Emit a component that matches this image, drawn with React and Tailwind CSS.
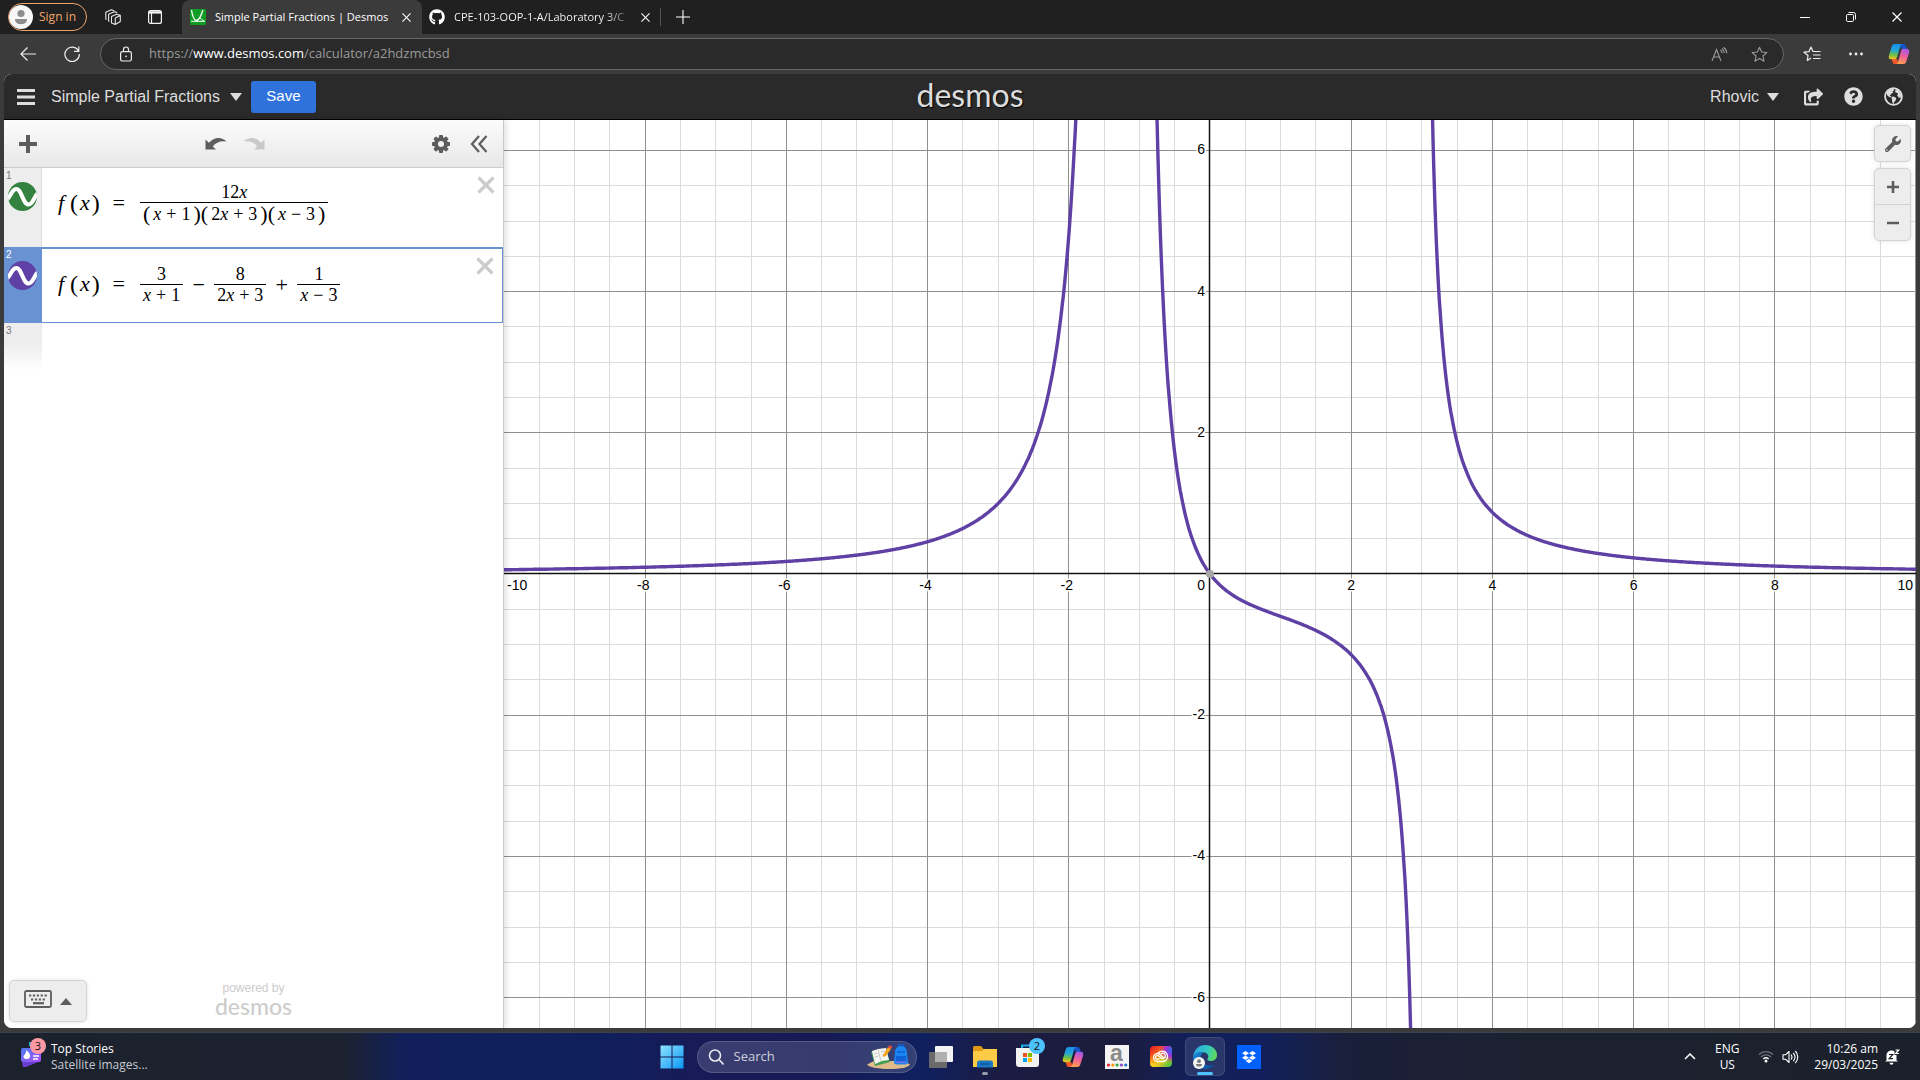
import React from "react";
import { FaGithub, FaWrench, FaQuestionCircle, FaShareSquare } from "react-icons/fa";

const UI = "font-['Open_Sans','Noto_Sans',sans-serif]";
const SANS = "font-['Liberation_Sans',Arial,sans-serif]";

/* ---------- shared drawings ---------- */

function CopilotIcon({ id, className }) {
  return (
    <svg viewBox="0 0 24 24" className={className} aria-hidden="true">
      <defs>
        <linearGradient id={id + "a"} x1="0.4" y1="0" x2="0.3" y2="1">
          <stop offset="0" stopColor="#1a8fe8" />
          <stop offset="0.4" stopColor="#22a7d8" />
          <stop offset="0.7" stopColor="#6cc04a" />
          <stop offset="1" stopColor="#f5c518" />
        </linearGradient>
        <linearGradient id={id + "b"} x1="0.7" y1="0" x2="0.4" y2="1">
          <stop offset="0" stopColor="#a259e6" />
          <stop offset="0.5" stopColor="#f0609a" />
          <stop offset="1" stopColor="#ffa14d" />
        </linearGradient>
      </defs>
      <path d="M12 1h5c1.500 0 2.200 1 2.700 2.500L20.500 6.500H15Z" fill="#1454c8" />
      <path d="M12 23H7.500C6 23 5.300 22 4.800 20.500L4 17.500h6Z" fill="#f0562c" />
      <path d="M7 1h9c-1.500 0-2.300 1.200-2.800 3L10 15c-.6 2-1.500 2.800-3.500 2.800H3.500C1 17.800.3 15.800 1 13.500L4 4c.6-2 1.500-3 3-3Z" fill={`url(#${id}a)`} />
      <path d="M17 23H8.500c1.300 0 2.200-1.200 2.700-3L14.200 9c.6-2 1.500-2.600 3.300-2.600h3C23 6.400 23.700 8.400 23 10.600L20 20c-.6 2-1.500 3-3 3Z" fill={`url(#${id}b)`} />
    </svg>
  );
}

function CloseGlyph({ className }) {
  return (
    <svg viewBox="0 0 10 10" className={className} aria-hidden="true">
      <path d="M0.500 0.500 9.500 9.500M9.500 0.500 0.500 9.500" stroke="currentColor" strokeWidth="1.200" fill="none" />
    </svg>
  );
}

/* ---------- browser chrome ---------- */

function TabStrip() {
  return (
    <header className={`${UI} flex h-[34px] shrink-0 items-stretch bg-[#202020] text-xs text-white`}>
      <button className="my-[3px] ml-2 flex w-[79px] shrink-0 items-center gap-[6px] rounded-full border border-[#f0a46c] text-[#f0a46c]">
        <svg viewBox="0 0 24 24" className="h-6 w-6 shrink-0" aria-hidden="true">
          <circle cx="12" cy="12" r="12" fill="#f7f7f7" />
          <circle cx="12" cy="8.500" r="3.600" fill="#8d8d8d" />
          <path d="M6 14h12c0 3.500-2.500 5.200-6 5.200S6 17.500 6 14Z" fill="#8d8d8d" />
        </svg>
        <span className="whitespace-nowrap">Sign in</span>
      </button>
      <button aria-label="Workspaces" className="ml-[5px] flex w-[42px] shrink-0 items-center justify-center">
        <svg viewBox="0 0 16 16" className="h-4 w-4" fill="none" stroke="#e6e6e6" strokeWidth="1.100" strokeLinejoin="round" aria-hidden="true">
          <path d="M6.500 7.500 11.500 5.300 15.300 6.400v6.200l-5 2.800-3.800-1.500ZM10.300 9v6.400M10.300 9l5-2.600" />
          <path d="M4.300 12.500 3.600 12V5.200l5.600-2.500 3 .9" />
          <path d="M1.600 10.500.8 10V3.300L6.300.8l3 .9" />
        </svg>
      </button>
      <button aria-label="Tab actions" className="flex w-[42px] shrink-0 items-center justify-center">
        <svg viewBox="0 0 14 14" className="h-[14px] w-[14px]" fill="none" stroke="#f2f2f2" strokeWidth="1.200" aria-hidden="true">
          <rect x="0.600" y="0.600" width="12.800" height="12.800" rx="2" />
          <path d="M0.600 2.400h12.800" strokeWidth="2.400" />
          <path d="M3.500 3v10.400" />
        </svg>
      </button>
      <div className="ml-[6px] flex w-[240px] shrink-0 items-center rounded-t-lg bg-[#3b3b3b] pl-2">
        <svg viewBox="0 0 16 16" className="h-4 w-4 shrink-0" aria-hidden="true">
          <rect width="16" height="16" rx="1" fill="#0d9a22" />
          <path d="M0 6h16M0 11h16M5 0v16M11 0v16" stroke="#2fae40" strokeWidth="0.500" />
          <path d="M1.500 1c1 6.500 2.500 10.500 5 10.500S11 7 13 1" stroke="#fff" strokeWidth="1.300" fill="none" />
          <path d="M1 12.300h14M6.500 11.500C8 11.500 8 9 10 9c1.500 0 2 3 4 3" stroke="#fff" strokeWidth="1" fill="none" />
        </svg>
        <span className="ml-[9px] flex-1 text-[11px] whitespace-nowrap">Simple Partial Fractions | Desmos</span>
        <button aria-label="Close tab" className="flex h-6 w-8 items-center justify-center">
          <CloseGlyph className="h-[9px] w-[9px]" />
        </button>
      </div>
      <div className="flex w-[238px] shrink-0 items-center pl-[7px]">
        <FaGithub className="h-4 w-4 shrink-0 text-white" />
        <span className="ml-[9px] w-[178px] bg-linear-to-r from-white from-85% to-white/10 bg-clip-text text-[11px] whitespace-nowrap text-transparent">CPE-103-OOP-1-A/Laboratory 3/C</span>
        <button aria-label="Close tab" className="flex h-6 w-[26px] items-center justify-center">
          <CloseGlyph className="h-[9px] w-[9px]" />
        </button>
      </div>
      <div className="my-2 w-px bg-[#555]" />
      <button aria-label="New tab" className="flex w-11 shrink-0 items-center justify-center">
        <svg viewBox="0 0 14 14" className="h-[14px] w-[14px]" aria-hidden="true">
          <path d="M7 0v14M0 7h14" stroke="#fff" strokeWidth="1.100" />
        </svg>
      </button>
      <div className="flex-1" />
      <button aria-label="Minimize" className="flex w-[46px] items-center justify-center">
        <svg viewBox="0 0 10 10" className="h-[10px] w-[10px]" aria-hidden="true"><path d="M0 5.500h10" stroke="#fff" /></svg>
      </button>
      <button aria-label="Restore" className="flex w-[46px] items-center justify-center">
        <svg viewBox="0 0 10 10" className="h-[10px] w-[10px]" fill="none" stroke="#fff" aria-hidden="true">
          <rect x="0.500" y="2.500" width="7" height="7" rx="1.200" />
          <path d="M2.500.5h5a2 2 0 0 1 2 2v5" />
        </svg>
      </button>
      <button aria-label="Close" className="flex w-[46px] items-center justify-center">
        <CloseGlyph className="h-[10px] w-[10px]" />
      </button>
    </header>
  );
}

const STAR = "M8 1.200l2 4.500 4.900.5-3.700 3.200 1.100 4.900L8 11.800l-4.300 2.500 1.100-4.900L1.100 6.200 6 5.700Z";

function AddressBar() {
  return (
    <nav className={`${UI} flex h-10 shrink-0 items-center bg-[#3b3b3b] text-[#eee]`}>
      <button aria-label="Back" className="ml-[6px] flex h-8 w-11 items-center justify-center">
        <svg viewBox="0 0 16 16" className="h-4 w-4" fill="none" stroke="currentColor" strokeWidth="1.200" aria-hidden="true">
          <path d="M16 8H1M7.500 1.500 1 8l6.500 6.500" />
        </svg>
      </button>
      <button aria-label="Refresh" className="flex h-8 w-11 items-center justify-center">
        <svg viewBox="0 0 16 16" className="h-4 w-4" fill="none" stroke="currentColor" strokeWidth="1.200" aria-hidden="true">
          <path d="M14.500 5A7.200 7.200 0 1 0 15.300 8M14.800 0.500v4.800h-4.800" />
        </svg>
      </button>
      <div className="ml-[6px] flex h-8 flex-1 items-center rounded-full border border-[#666] bg-[#2a2a2a] text-[13px]">
        <button aria-label="Site information" className="ml-[19px] flex w-3 items-center justify-center">
          <svg viewBox="0 0 12 16" className="h-4 w-3 shrink-0" fill="none" stroke="currentColor" strokeWidth="1.200" aria-hidden="true">
            <rect x="0.600" y="5.600" width="10.800" height="9.400" rx="1.800" />
            <path d="M3.500 5.500V3.500a2.500 2.500 0 0 1 5 0v2" />
            <circle cx="6" cy="10.300" r="0.900" fill="currentColor" stroke="none" />
          </svg>
        </button>
        <div role="textbox" aria-label="Address" className="ml-[17px] flex-1 whitespace-nowrap text-[#9a9a9a]">
          https://<span className="text-white">www.desmos.com</span>/calculator/a2hdzmcbsd
        </div>
        <button aria-label="Read aloud" className="flex w-10 items-center justify-center text-[#9c9c9c]">
          <svg viewBox="0 0 17 15" className="h-[15px] w-[17px]" fill="none" stroke="currentColor" strokeWidth="1.100" aria-hidden="true">
            <path d="M1 14 5.500 2.500 10 14M2.600 10h5.800M9.500 3c1 .8 1.500 1.800 1.500 3M11 1.500c1.500 1.200 2.300 2.600 2.300 4.500M12.500.3C14.700 1.900 15.800 3.900 15.800 6.300" />
          </svg>
        </button>
        <button aria-label="Add to favourites" className="mr-1 flex w-10 items-center justify-center text-[#9c9c9c]">
          <svg viewBox="0 0 16 16" className="h-[17px] w-[17px]" fill="none" stroke="currentColor" strokeLinejoin="round" aria-hidden="true"><path d={STAR} /></svg>
        </button>
      </div>
      <button aria-label="Favourites" className="ml-[6px] flex h-8 w-11 items-center justify-center">
        <svg viewBox="0 0 18 16" className="h-4 w-[18px]" fill="none" stroke="currentColor" strokeWidth="1.200" strokeLinejoin="round" aria-hidden="true">
          <path d="M8 12 4.300 14.500 5 9.500 1 6.200 6 5.600 8 1l2 4.500h7.500M10 9h7.500M10 12.500h7.500" />
        </svg>
      </button>
      <button aria-label="Settings and more" className="flex h-8 w-11 items-center justify-center">
        <svg viewBox="0 0 14 4" className="h-1 w-[14px]" fill="currentColor" aria-hidden="true">
          <circle cx="1.500" cy="2" r="1.400" /><circle cx="7" cy="2" r="1.400" /><circle cx="12.500" cy="2" r="1.400" />
        </svg>
      </button>
      <button aria-label="Copilot" className="flex h-8 w-[42px] items-center justify-center">
        <CopilotIcon id="cpTop" className="h-[22px] w-[22px]" />
      </button>
    </nav>
  );
}

/* ---------- calculator ---------- */

function AppHeader() {
  return (
    <header className={`${SANS} grid h-[46px] shrink-0 grid-cols-[1fr_auto_1fr] items-center border-b border-black bg-[#2a2a2a] text-[#ddd]`}>
      <div className="flex items-center">
        <button aria-label="Open graph list" className="ml-[13px] flex w-[18px] justify-center">
          <svg viewBox="0 0 18 16" className="h-4 w-[18px]" aria-hidden="true">
            <path d="M0 1.500h18M0 8h18M0 14.500h18" stroke="#ddd" strokeWidth="3" />
          </svg>
        </button>
        <button className="ml-4 flex items-center gap-[10px] whitespace-nowrap text-base">
          Simple Partial Fractions
          <svg viewBox="0 0 12 8" className="h-2 w-3" aria-hidden="true"><path d="M0 0h12L6 8Z" fill="#ddd" /></svg>
        </button>
        <button className="ml-[9px] h-8 w-[65px] rounded-[3px] bg-[#2f72dc] text-[15px] text-white">Save</button>
      </div>
      <div className="pb-[3px] pl-5 font-[Lato,sans-serif] text-[32px] leading-none text-[#ddd] text-shadow-[1px_1px_1px_#000]">desmos</div>
      <div className="flex items-center justify-end pr-[13px]">
        <button className="flex items-center gap-2 text-base">
          Rhovic
          <svg viewBox="0 0 12 8" className="h-2 w-3" aria-hidden="true"><path d="M0 0h12L6 8Z" fill="#ddd" /></svg>
        </button>
        <button aria-label="Share graph" className="ml-[25px] w-[19px]"><FaShareSquare className="h-[18px] w-[19px]" /></button>
        <button aria-label="Help" className="ml-[21px] w-[19px]"><FaQuestionCircle className="h-[19px] w-[19px]" /></button>
        <button aria-label="Language" className="ml-[21px] w-[19px]">
          <svg viewBox="0 0 18 18" className="h-[19px] w-[19px]" aria-hidden="true">
            <circle cx="9" cy="9" r="8" fill="none" stroke="#ddd" strokeWidth="1.700" />
            <path d="M3 4.500C4.500 2.800 6.500 1.500 9 1.500l.5 1.700-1.500.8 1 1L7 6.500 5.500 8 7 9.200l-1 .8L3.500 8.500 2.200 6Z" fill="#ddd" />
            <path d="M7 9.500 9 9l2.700 1.500-.7 2.300-1.500 1.700L9 16.500 7.800 14.500 7.600 12Z" fill="#ddd" />
            <path d="M11 2 14.200 3.500l2 3.500-.5 3.500-1.500-.2L12.500 8l.8-1.800-1.300-.8-1.500-.4Z" fill="#ddd" />
          </svg>
        </button>
      </div>
    </header>
  );
}

const V = ({ children }) => <i className="italic">{children}</i>;
const Op = ({ children }) => <span className="mx-[5px]">{children}</span>;

function Frac({ num, den }) {
  return (
    <span className="inline-flex flex-col items-center text-lg leading-5">
      <span>{num}</span>
      <span className="flex items-center justify-center whitespace-nowrap border-t border-black px-[3px]">{den}</span>
    </span>
  );
}

function Group({ children }) {
  return (
    <span className="flex items-center">
      <Paren small>(</Paren>
      <span className="px-[3px]">{children}</span>
      <Paren small>)</Paren>
    </span>
  );
}

function Paren({ small, children }) {
  return <span className={small ? "text-[22px] leading-[22px]" : "text-2xl leading-[26px]"}>{children}</span>;
}

function FOfX() {
  return (
    <span className="flex w-[84px] items-center text-[22px] leading-[26px]">
      <span className="w-[14px] pl-[2px]"><V>f</V></span>
      <Paren>(</Paren>
      <span className="px-[2px]"><V>x</V></span>
      <Paren>)</Paren>
      <span className="ml-auto">=</span>
      <span className="w-[15px]" />
    </span>
  );
}

function ExpressionRow({ index, color, selected, children }) {
  return (
    <li className={selected ? "flex h-[76px] border-2 border-x-0 border-b-0 border-[#6992d2]" : "flex h-[79px]"}>
      <div className={selected ? "flex w-[37px] shrink-0 flex-col items-center bg-[#6992d2] text-white" : "flex w-[38px] shrink-0 flex-col items-center border-r border-[#ddd] bg-[#ededed] text-[#777]"}>
        <span className={selected ? `${SANS} self-start pl-[2px] text-[10px] leading-3` : `${SANS} self-start pt-px pl-[2px] text-[10px] leading-[13px]`}>{index}</span>
        <button aria-label={`Toggle expression ${index}`} className="h-[29px] w-[29px]">
          <svg viewBox="0 0 29 29" className="h-[29px] w-[29px]" aria-hidden="true">
            <defs><clipPath id={`disc${index}`}><circle cx="14.500" cy="14.500" r="14.500" /></clipPath></defs>
            <circle cx="14.500" cy="14.500" r="14.500" fill={color} />
            <path d="M-1 17.500C3.500 13 4 7 8.500 7c5 0 6.500 15.500 12 15.500C25 22.500 25.500 15.500 30 11" stroke="#fff" strokeWidth="4.200" fill="none" clipPath={`url(#disc${index})`} />
          </svg>
        </button>
      </div>
      <div className={selected ? "flex flex-1 items-start border border-t-0 border-[#6992d2]" : "flex flex-1 items-start"}>
        <div role="math" className="flex h-[70px] flex-1 items-center pl-[14px] font-['Liberation_Serif',serif] text-[22px] text-black">
          {children}
        </div>
        <button aria-label="Delete expression" className="mt-2 mr-2">
          <svg viewBox="0 0 18 18" className="h-[18px] w-[18px]" aria-hidden="true">
            <path d="M1.500 1.500l15 15M16.500 1.500l-15 15" stroke="#ccc" strokeWidth="3.200" />
          </svg>
        </button>
      </div>
    </li>
  );
}

function ExpressionPanel() {
  const teeth = [0, 45, 90, 135, 180, 225, 270, 315];
  return (
    <aside className="z-10 flex w-[500px] shrink-0 flex-col border-r border-[#c9c9c9] bg-white shadow-[0_0_8px_rgba(0,0,0,0.2)]">
      <div className="flex h-12 shrink-0 items-center border-b border-[#ccc] bg-linear-to-b from-[#fcfcfc] to-[#e8e8e8] px-[15px]">
        <button aria-label="Add item">
          <svg viewBox="0 0 18 18" className="h-[18px] w-[18px]" aria-hidden="true"><path d="M9 0v18M0 9h18" stroke="#5d5d5d" strokeWidth="4" /></svg>
        </button>
        <div className="flex flex-1 items-center justify-center gap-4">
          <button aria-label="Undo">
            <svg viewBox="0 0 22 13" className="h-[13px] w-[22px]" aria-hidden="true">
              <path d="M0.500 2.500V12.500H11L7.800 9.500C10.500 5.500 15.500 3.500 21.500 4.500 17-.3 9-.6 4 5.800Z" fill="#5d5d5d" />
            </svg>
          </button>
          <button aria-label="Redo">
            <svg viewBox="0 0 22 13" className="h-[13px] w-[22px]" aria-hidden="true">
              <path d="M21.500 2.500V12.500H11L14.200 9.500C11.500 5.500 6.500 3.500.5 4.500 5-.3 13-.6 18 5.800Z" fill="#c9c9c9" />
            </svg>
          </button>
        </div>
        <button aria-label="Edit list">
          <svg viewBox="0 0 18 18" className="h-[18px] w-[18px]" aria-hidden="true">
            <circle cx="9" cy="9" r="5" fill="none" stroke="#5d5d5d" strokeWidth="4" />
            {teeth.map((a) => <rect key={a} x="7" y="0" width="4" height="4" rx="0.800" fill="#5d5d5d" transform={`rotate(${a} 9 9)`} />)}
          </svg>
        </button>
        <button aria-label="Hide expression list" className="ml-5">
          <svg viewBox="0 0 18 18" className="h-[18px] w-[18px]" fill="none" stroke="#5d5d5d" strokeWidth="2.200" aria-hidden="true">
            <path d="M9 1 2 9l7 8M16.500 1l-7 8 7 8" />
          </svg>
        </button>
      </div>
      <ol>
        <ExpressionRow index={1} color="#34823f">
          <FOfX />
          <Frac
            num={<>12<V>x</V></>}
            den={<>
              <Group><V>x</V><Op>+</Op>1</Group>
              <Group>2<V>x</V><Op>+</Op>3</Group>
              <Group><V>x</V><Op>−</Op>3</Group>
            </>}
          />
        </ExpressionRow>
        <ExpressionRow index={2} color="#5f41a5" selected>
          <FOfX />
          <Frac num="3" den={<span><V>x</V><Op>+</Op>1</span>} />
          <span className="w-[31px] text-center">−</span>
          <Frac num="8" den={<span>2<V>x</V><Op>+</Op>3</span>} />
          <span className="w-[31px] text-center">+</span>
          <Frac num="1" den={<span><V>x</V><Op>−</Op>3</span>} />
        </ExpressionRow>
        <li className="flex h-12">
          <div className="w-[38px] bg-linear-to-b from-[#ededed] from-40% to-white">
            <span className={`${SANS} block pl-[2px] pt-px text-[10px] leading-[13px] text-[#777]`}>3</span>
          </div>
        </li>
      </ol>
      <div className="mt-auto grid grid-cols-[1fr_auto_1fr] items-end px-[5px] pb-[6px]">
        <button aria-label="Show keypad" className="flex h-[42px] w-[78px] items-center justify-center gap-2 rounded-[5px] border border-[#d3d3d3] bg-[#ededed] pb-1 shadow-[0_0_5px_rgba(0,0,0,0.1)]">
          <svg viewBox="0 0 28 18" className="h-[18px] w-[28px]" aria-hidden="true">
            <rect x="1" y="1" width="26" height="16" rx="1.500" fill="none" stroke="#5d5d5d" strokeWidth="1.800" />
            <path d="M5 5.500h18" stroke="#5d5d5d" strokeWidth="2.200" strokeDasharray="2.200 1.700" />
            <path d="M7 9.500h15" stroke="#5d5d5d" strokeWidth="2.200" strokeDasharray="2.200 1.700" />
            <path d="M9 13.200h11" stroke="#5d5d5d" strokeWidth="2.200" />
          </svg>
          <svg viewBox="0 0 12 7" className="mt-1 h-[7px] w-3" aria-hidden="true"><path d="M0 7h12L6 0Z" fill="#5d5d5d" /></svg>
        </button>
        <div className="flex flex-col items-center pb-[5px] text-[#ccc]">
          <span className={`${SANS} text-xs leading-[14px]`}>powered by</span>
          <span className="font-[Lato,sans-serif] text-[23px] leading-[22px] font-medium">desmos</span>
        </div>
        <span />
      </div>
    </aside>
  );
}

const W = 1412, H = 908, OX = 706, OY = 454, UNIT = 70.6;
const f = (x) => 3 / (x + 1) - 8 / (2 * x + 3) + 1 / (x - 3);

function branch(from, to) {
  const pts = [];
  for (let x = from; x <= to; x += 0.01) {
    const y = f(x);
    if (Math.abs(y) < 9) pts.push(`${(OX + x * UNIT).toFixed(1)} ${(OY - y * UNIT).toFixed(1)}`);
  }
  return "M" + pts.join("L");
}

function Graph() {
  const xs = [], ys = [];
  for (let k = -20; k <= 20; k++) xs.push(k);
  for (let k = -12; k <= 12; k++) ys.push(k);
  const px = (k) => Math.floor(OX - 0.1 + (k / 2) * UNIT) + 0.5;
  const py = (k) => Math.floor(OY - (k / 2) * UNIT) + 0.5;
  const tone = (k) => (k % 4 === 0 ? "#909090" : "#dcdcdc");
  const halo = { paintOrder: "stroke", stroke: "#fff", strokeWidth: 3 };
  return (
    <main className="relative min-w-0 flex-1 bg-white">
      <svg viewBox={`0 0 ${W} ${H}`} preserveAspectRatio="xMidYMid slice" className="absolute inset-0 h-full w-full" role="img" aria-label="Graph of the function">
        {[1, 0].map((minor) => (
          <g key={minor}>
            {xs.filter((k) => k && (k % 4 !== 0) === !!minor).map((k) => <path key={"x" + k} d={`M${px(k)} 0V${H}`} stroke={tone(k)} />)}
            {ys.filter((k) => k && (k % 4 !== 0) === !!minor).map((k) => <path key={"y" + k} d={`M0 ${py(k)}H${W}`} stroke={tone(k)} />)}
          </g>
        ))}
        <path d={`M0 453.500H${W}M705.500 0V${H}`} stroke="#111" strokeWidth="1.500" />
        <g fontFamily="Liberation Sans, Arial, sans-serif" fontSize="14" fill="#000">
          {[-8, -6, -4, -2, 2, 4, 6, 8].map((n) => (
            <text key={n} x={OX + n * UNIT - (n < 0 ? 2 : 0)} y="470" textAnchor="middle" style={halo}>{n}</text>
          ))}
          <text x="3" y="470" style={halo}>-10</text>
          <text x={W - 3} y="470" textAnchor="end" style={halo}>10</text>
          <text x="701" y="470" textAnchor="end" style={halo}>0</text>
          {[-6, -4, -2, 2, 4, 6].map((n) => (
            <text key={n} x="701" y={OY - n * UNIT + 4} textAnchor="end" style={halo}>{n}</text>
          ))}
        </g>
        <g fill="none" stroke="#5f41a5" strokeWidth="3.400" strokeLinejoin="round">
          <path d={branch(-10.2, -1.55)} />
          <path d={branch(-0.97, 2.99)} />
          <path d={branch(3.01, 10.2)} />
        </g>
        <circle cx="706" cy="454" r="4" fill="#a6a6a6" />
      </svg>
      <div className="absolute top-[5px] right-[5px] flex w-[37px] flex-col gap-[6px] text-[#5d5d5d]">
        <button aria-label="Graph settings" className="flex h-[37px] items-center justify-center rounded-[5px] border border-[#d3d3d3] bg-[#ededed] shadow-[0_0_5px_rgba(0,0,0,0.12)]">
          <FaWrench className="h-4 w-4" />
        </button>
        <div className="flex flex-col rounded-[5px] border border-[#d3d3d3] bg-[#ededed] shadow-[0_0_5px_rgba(0,0,0,0.12)]">
          <button aria-label="Zoom in" className="flex h-9 items-center justify-center border-b border-[#d3d3d3]">
            <svg viewBox="0 0 12 12" className="h-3 w-3" aria-hidden="true"><path d="M6 0v12M0 6h12" stroke="currentColor" strokeWidth="2.600" /></svg>
          </button>
          <button aria-label="Zoom out" className="flex h-[35px] items-center justify-center">
            <svg viewBox="0 0 12 12" className="h-3 w-3" aria-hidden="true"><path d="M0 6h12" stroke="currentColor" strokeWidth="2.600" /></svg>
          </button>
        </div>
      </div>
    </main>
  );
}

/* ---------- taskbar ---------- */

function TaskButton({ label, active, running, children }) {
  return (
    <button aria-label={label} className="relative flex h-[47px] w-11 items-center justify-center">
      {active && <span className="absolute inset-x-[2px] inset-y-1 rounded-md border border-white/10 bg-white/10" />}
      <span className="relative">{children}</span>
      {running && <span className="absolute bottom-[5px] h-[3px] w-[6px] rounded-full bg-[#9a9aa8]" />}
      {active && <span className="absolute bottom-[5px] h-[3px] w-4 rounded-full bg-[#4cc2ff]" />}
    </button>
  );
}

function Taskbar() {
  return (
    <footer className={`${UI} grid h-12 shrink-0 grid-cols-[1fr_auto_1fr] items-center border-t border-[#3c4350] bg-[linear-gradient(90deg,#1c222c_0%,#1c2230_18%,#11205a_21%,#0f1f5c_31%,#171b57_36%,#151a55_43%,#0f2060_48%,#1b1c42_52%,#1c1c3c_58%,#12205a_62%,#11205a_66%,#1a1f3a_70%,#1c2130_80%,#1b212b_100%)] text-xs text-white`}>
      <button className="flex w-[160px] items-center gap-[9px] pl-5 text-left">
        <svg viewBox="0 0 26 30" className="-mt-2 -mr-1 h-[30px] w-[26px] shrink-0" aria-hidden="true">
          <defs><linearGradient id="news" x1="0" y1="0" x2="1" y2="1"><stop offset="0" stopColor="#4a7bf0" /><stop offset="1" stopColor="#b04cf8" /></linearGradient></defs>
          <path d="M2 24h16l-12 5H3Z" fill="#6a3fd0" />
          <path d="M9 8V4h8v6Z" fill="#2aa8c8" />
          <rect x="1" y="10" width="20" height="14" rx="2" fill="url(#news)" />
          <path d="M6.500 12c3 3 4 4.500 3.500 7s-6 3-6.500 0c0-2 2-2 3-7Z" fill="#fff" />
          <path d="M13 18h6M13 21h5" stroke="#fff" strokeWidth="1.400" />
          <circle cx="18" cy="8" r="8" fill="#ff99a4" />
          <text x="18" y="12" textAnchor="middle" fontSize="11" fill="#111" fontFamily="Open Sans, sans-serif">3</text>
        </svg>
        <span className="leading-4 whitespace-nowrap">
          <span className="block">Top Stories</span>
          <span className="block text-[#c4c8d0]">Satellite images...</span>
        </span>
      </button>

      <div className="flex items-center">
        <TaskButton label="Start">
          <svg viewBox="0 0 24 24" className="h-6 w-6" aria-hidden="true">
            <defs><linearGradient id="win" x1="0" y1="0" x2="1" y2="1"><stop offset="0" stopColor="#8fe3ff" /><stop offset="1" stopColor="#0a97f5" /></linearGradient></defs>
            <path d="M1 .5h10.500V11.500H.5V1ZM12.500.5h11v11h-11ZM.5 12.500h11v11h-11ZM12.500 12.500h11v11h-11Z" fill="url(#win)" />
          </svg>
        </TaskButton>
        <label className="mr-[2px] ml-[3px] flex h-8 w-[220px] items-center rounded-full border border-white/15 bg-white/15 pl-[10px]">
          <svg viewBox="0 0 16 16" className="h-4 w-4 shrink-0" fill="none" stroke="#e8e8f0" strokeWidth="1.600" aria-hidden="true"><circle cx="7" cy="6.500" r="5.500" /><path d="M11 10.500l4.500 5" /></svg>
          <input type="search" aria-label="Search" placeholder="Search" className="ml-[10px] w-0 flex-1 bg-transparent text-[13px] outline-none placeholder:text-[#cdd0dc]" />
          <svg viewBox="0 0 46 26" className="mr-1 h-[26px] w-[46px] shrink-0" aria-hidden="true">
            <path d="M3 19.500 8 17h30l6 3.500c-2 3-9 4.500-20 4.500S3 23.500 1 20.500Z" fill="#e0bb8a" />
            <path d="M5 8l15-3 4 13-15 4Z" fill="#3f9d54" />
            <path d="M6 7l6-2 8-1 3 12-7 1-7 3Z" fill="#f6f6f0" />
            <path d="M12 6l3 11M8 10l3-1M9 13l3-1M15 8l4-1M16 11l4-1" stroke="#b9b9c0" strokeWidth="0.800" />
            <path d="M17 11l5-8 3 2-5 7-3 1Z" fill="#f7a823" /><path d="M22 3l1.500-2 3 1.800L25 5Z" fill="#e8453c" />
            <path d="M29 9c0-5 2.500-7 6-7s6 2 6 7l1 9c0 1.500-1 2.500-2.500 2.500h-9C29 20.500 28 19.500 28 18Z" fill="#1b86f2" />
            <path d="M32 2.500c0-3 6-3 6 0M31 8h8" stroke="#0f5fd0" strokeWidth="1.500" fill="none" />
            <path d="M30 12h10v6H30Z" fill="#0d62d8" /><path d="M30 18h10" stroke="#b36cf0" />
          </svg>
        </label>
        <TaskButton label="Task view">
          <svg viewBox="0 0 24 22" className="h-[22px] w-6" aria-hidden="true">
            <rect x="6" y="0" width="18" height="16" rx="1" fill="#f3f3f3" />
            <rect x="0" y="6" width="18" height="16" rx="1" fill="#6a6a6a" />
            <rect x="6" y="6" width="12" height="10" fill="#b0b0b0" />
          </svg>
        </TaskButton>
        <TaskButton label="File Explorer" running>
          <svg viewBox="0 0 24 22" className="h-[22px] w-6" aria-hidden="true">
            <path d="M0 1.500C0 .7.700 0 1.500 0H8l2.500 3H24v6H0Z" fill="#dd9a12" />
            <path d="M0 5h9l2-2h13v18H0Z" fill="#fdcb45" />
            <path d="M4 21.500V17a2.500 2.500 0 0 1 2.500-2.500h11A2.500 2.500 0 0 1 20 17v4.500Z" fill="#1a78c2" />
            <path d="M7.500 18h9" stroke="#0d5796" strokeWidth="1.500" />
          </svg>
        </TaskButton>
        <TaskButton label="Microsoft Store">
          <svg viewBox="0 0 30 30" className="-mt-2 ml-[2px] h-[30px] w-[30px]" aria-hidden="true">
            <path d="M7 11V7.500h9V11" stroke="#1ba8ea" strokeWidth="2" fill="none" />
            <path d="M1 10h23v16a3 3 0 0 1-3 3H4a3 3 0 0 1-3-3Z" fill="#f2f2f2" />
            <path d="M8 15h4v4H8Z" fill="#f25022" /><path d="M13 15h4v4h-4Z" fill="#7fba00" />
            <path d="M8 20h4v4H8Z" fill="#00a4ef" /><path d="M13 20h4v4h-4Z" fill="#ffb900" />
            <circle cx="22" cy="8" r="8" fill="#4cc2ff" />
            <text x="22" y="12" textAnchor="middle" fontSize="11" fill="#111" fontFamily="Open Sans, sans-serif">2</text>
          </svg>
        </TaskButton>
        <TaskButton label="Copilot"><CopilotIcon id="cpTask" className="h-[22px] w-[22px]" /></TaskButton>
        <TaskButton label="Amazon">
          <span className="relative flex h-6 w-6 items-center justify-center bg-[#f4f4f4] pb-[7px] font-['Liberation_Sans',sans-serif] text-[23px] leading-none font-bold text-[#8a8a8a]">
            a
            <svg viewBox="0 0 24 4" className="absolute inset-x-0 bottom-[2px] h-1 w-6" aria-hidden="true">
              {["#e23", "#f90", "#3a4", "#84c", "#27c"].map((c, i) => <circle key={c} cx={3.500 + i * 4.300} cy="2" r="1.600" fill={c} />)}
            </svg>
          </span>
        </TaskButton>
        <TaskButton label="Creative Cloud">
          <svg viewBox="0 0 22 21" className="h-[21px] w-[22px]" aria-hidden="true">
            <defs>
              <linearGradient id="cca" x1="0" y1="0" x2="1" y2="1"><stop offset="0" stopColor="#e8102a" /><stop offset="0.350" stopColor="#f2661a" /><stop offset="0.600" stopColor="#d9d020" /><stop offset="1" stopColor="#34c04a" /></linearGradient>
              <radialGradient id="ccb" cx="1" cy="0.200" r="0.600"><stop offset="0" stopColor="#2a6cf0" /><stop offset="0.500" stopColor="#a030d8" /><stop offset="1" stopColor="#e82060" stopOpacity="0" /></radialGradient>
              <radialGradient id="ccc" cx="0.100" cy="1" r="0.600"><stop offset="0" stopColor="#f8e020" /><stop offset="1" stopColor="#f8a020" stopOpacity="0" /></radialGradient>
            </defs>
            <rect width="22" height="21" rx="4" fill="url(#cca)" /><rect width="22" height="21" rx="4" fill="url(#ccb)" /><rect width="22" height="21" rx="4" fill="url(#ccc)" />
            <g fill="none" stroke="#fff" strokeWidth="1.300" strokeLinecap="round">
              <path d="M13.500 15.500H7.500a4 4 0 1 1 2.700-7l3.300 3.200" />
              <path d="M8.500 7A5.200 5.200 0 1 1 13.500 15.500" />
              <path d="M9 12.700a2 2 0 1 1 0-2.700l1.800 1.800c1.800 1.500 4.700.3 4.700-2a2.700 2.700 0 0 0-4.300-2" />
            </g>
          </svg>
        </TaskButton>
        <TaskButton label="Microsoft Edge" active>
          <svg viewBox="0 0 24 24" className="h-6 w-6" aria-hidden="true">
            <defs>
              <linearGradient id="eda" x1="0" y1="0.300" x2="1" y2="0.500"><stop offset="0" stopColor="#2aa4e8" /><stop offset="0.600" stopColor="#34c9c0" /><stop offset="1" stopColor="#62da55" /></linearGradient>
              <linearGradient id="edb" x1="0" y1="0" x2="1" y2="1"><stop offset="0" stopColor="#1c88d8" /><stop offset="1" stopColor="#0c4a9a" /></linearGradient>
            </defs>
            <path d="M0 12C1 5 5 0 12 0c7 0 12 4.500 12 10 0 4-3 6-6.500 6-2.500 0-3.600-1-3-2 1.500-2 1-5-2-6.300C8 6 2.500 7.500 0 12Z" fill="url(#eda)" />
            <path d="M0 12c2-4.500 7.500-6 11-4.500-3 1-4 4-3.300 6.500 1 4.500 5.500 7 10 6.300 1.500-.2 3-.9 4.300-1.800C19.800 22 16 24 12 24 5 24 0 18.500 0 12Z" fill="url(#edb)" />
            <circle cx="6" cy="18" r="6" fill="#f4f4f4" /><circle cx="6" cy="16.200" r="1.900" fill="#777" /><path d="M3 19h6c0 1.800-1.200 2.600-3 2.600S3 20.800 3 19Z" fill="#777" />
          </svg>
        </TaskButton>
        <TaskButton label="Dropbox">
          <svg viewBox="0 0 24 24" className="h-6 w-6" aria-hidden="true">
            <rect width="24" height="24" fill="#0061ff" />
            <path d="M8.500 6 12 8.200 8.500 10.500 5 8.200ZM15.500 6 19 8.200 15.500 10.500 12 8.200ZM8.500 10.500 12 12.700 8.500 15 5 12.700ZM15.500 10.500 19 12.700 15.500 15 12 12.700ZM12 13.700 15.300 15.900 12 18.200 8.700 15.900Z" fill="#fff" />
          </svg>
        </TaskButton>
      </div>

      <div className="flex items-center justify-end pr-5">
        <button aria-label="Show hidden icons" className="mr-4">
          <svg viewBox="0 0 12 7" className="h-[7px] w-3" fill="none" stroke="#fff" strokeWidth="1.500" aria-hidden="true"><path d="M1 6l5-5 5 5" /></svg>
        </button>
        <button className="w-[30px] text-center leading-4">ENG<br />US</button>
        <button aria-label="Network and volume" className="ml-4 flex items-center gap-2">
          <svg viewBox="0 0 16 13" className="h-[13px] w-4" fill="none" strokeWidth="1.300" aria-hidden="true">
            <path d="M1 4.500a10 10 0 0 1 14 0M3 7a7 7 0 0 1 10 0" stroke="#6e7480" />
            <path d="M5.300 9a4 4 0 0 1 5.400 0" stroke="#fff" /><circle cx="8" cy="11" r="1.500" fill="#fff" />
          </svg>
          <svg viewBox="0 0 17 14" className="h-[14px] w-[17px]" fill="none" stroke="#fff" strokeWidth="1.100" strokeLinejoin="round" aria-hidden="true">
            <path d="M1 4.800h2.500L7 1.500v11L3.500 9.200H1ZM9 4.500c1.200 1.500 1.200 3.500 0 5M11.200 2.800c2.200 2.500 2.200 5.900 0 8.400M13.300 1c3.300 3.500 3.300 8.500 0 12" />
          </svg>
        </button>
        <button className="ml-[15px] text-right leading-4">10:26 am<br />29/03/2025</button>
        <button aria-label="Notifications" className="ml-[7px]">
          <svg viewBox="0 0 15 16" className="h-4 w-[15px]" aria-hidden="true">
            <path d="M1.500 11.500V6.500C1.500 3.200 4 1.500 6.500 1.500c3.300 0 5 2.300 5 5v5l1.500 1H0ZM4.500 13.700h4c-.3 2.600-3.700 2.600-4 0Z" fill="#fff" />
            <path d="M4 5.500h3.800L4.200 9.700h3.800" stroke="#1b212b" strokeWidth="1.200" fill="none" />
            <path d="M9.500 0h5.500v6H9.500Z" fill="#1b212b" /><path d="M10.500 1h3.200l-3 3.500h3.300" stroke="#fff" strokeWidth="1.200" fill="none" />
          </svg>
        </button>
      </div>
    </footer>
  );
}

export default function App() {
  return (
    <div className="flex h-screen flex-col overflow-hidden bg-[#3b3b3b]">
      <TabStrip />
      <AddressBar />
      <div className="mx-1 mb-1 flex min-h-0 flex-1 flex-col overflow-hidden rounded-lg bg-white">
        <AppHeader />
        <div className="flex min-h-0 flex-1">
          <ExpressionPanel />
          <Graph />
        </div>
      </div>
      <Taskbar />
    </div>
  );
}
